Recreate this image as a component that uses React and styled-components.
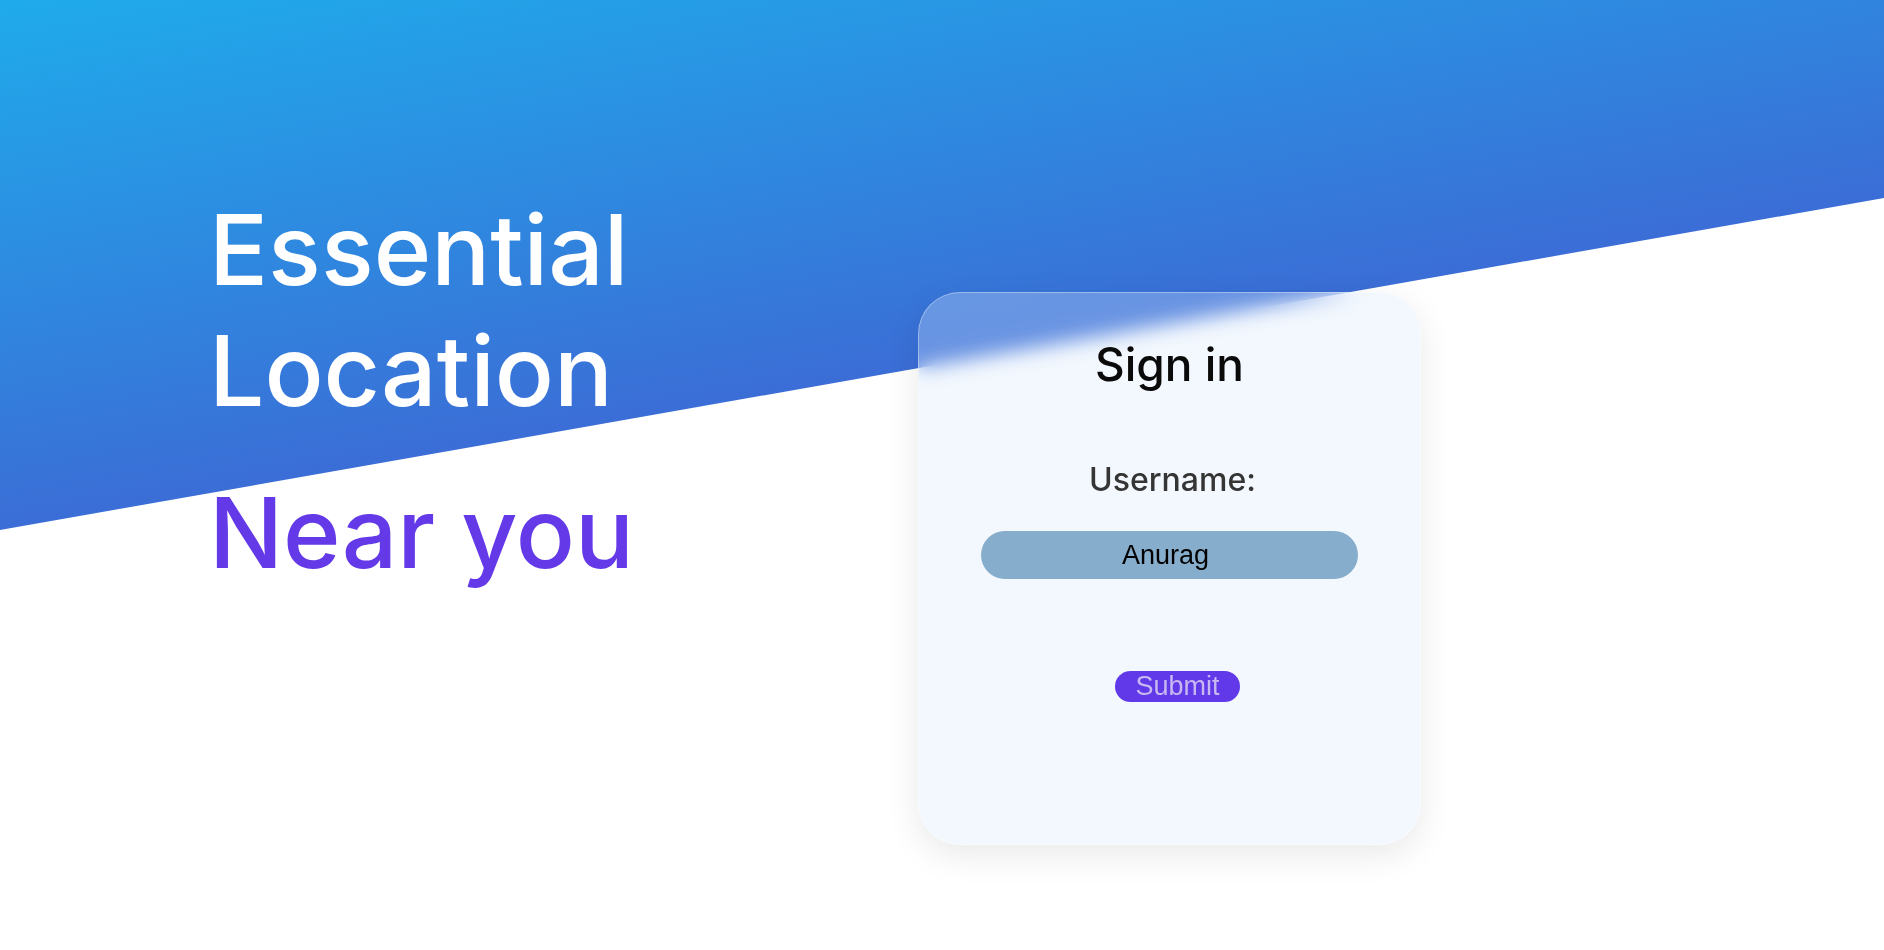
import React from "react";
import styled, { createGlobalStyle } from "styled-components";

const GlobalStyle = createGlobalStyle`
	html, body {
		margin: 0;
		padding: 0;
		background: #ffffff;
	}
	body {
		font-family: Inter, "Noto Sans", sans-serif;
	}
`;

const Page = styled.main`
	position: relative;
	height: 100vh;
	overflow: hidden;
	background: #ffffff;

	&::before {
		content: "";
		position: absolute;
		inset: 0 0 auto 0;
		height: 530px;
		background: linear-gradient(170deg, #1fabeb 0%, #3b6dd6 62%, #4062d3 100%);
		clip-path: polygon(0 0, 100% 0, 100% 198px, 0 530px);
		z-index: 0;
	}
`;

const Hero = styled.section`
	position: relative;
	z-index: 1;
	display: flex;
	align-items: flex-start;
	padding: 189px 0 0 209px;
`;

const Intro = styled.div`
	width: 709px;
	flex-shrink: 0;
`;

const Headline = styled.h1`
	margin: 0;
	width: 500px;
	font-size: 98px;
	line-height: 121px;
	font-weight: 500;
	color: ${p => p.$accent ? "#6339e8" : "#ffffff"};
	margin-top: ${p => p.$accent ? "41px" : "0"};
`;

const Card = styled.form`
	margin-top: 103px;
	width: 503px;
	height: 553px;
	box-sizing: border-box;
	padding-top: 43px;
	display: flex;
	flex-direction: column;
	align-items: center;
	border-radius: 42px;
	background: rgba(215, 232, 252, 0.3);
	backdrop-filter: blur(10px);
	border: 1px solid rgba(255, 255, 255, 0.35);
	box-shadow: 0 10px 34px rgba(0, 0, 0, 0.09);
`;

const CardTitle = styled.h2`
	margin: 0;
	font-size: 46px;
	line-height: 56px;
	font-weight: 500;
	color: #0a0a0a;
`;

const Label = styled.label`
	margin-top: 68px;
	font-size: 32px;
	line-height: 40px;
	font-weight: 500;
	color: #353535;
	padding-left: 6px;
`;

const TextInput = styled.input`
	margin-top: 31px;
	width: 377px;
	height: 48px;
	box-sizing: border-box;
	border: none;
	outline: none;
	border-radius: 24px;
	background: #87adcc;
	font-family: "Liberation Sans", Arial, sans-serif;
	font-size: 27px;
	color: #000000;
	text-align: center;
	padding: 0 12px 0 4px;
`;

const SubmitButton = styled.button`
	margin-top: 92px;
	margin-left: 16px;
	padding: 0 20px;
	height: 31px;
	border: none;
	border-radius: 16px;
	background: #6139e9;
	color: #c8b8f2;
	font-family: "Liberation Sans", Arial, sans-serif;
	font-size: 27px;
	line-height: 31px;
	cursor: pointer;
`;

const SignIn = () => (
	<Card onSubmit={e => e.preventDefault()}>
		<CardTitle>Sign in</CardTitle>
		<Label htmlFor="username">Username:</Label>
		<TextInput id="username" defaultValue="Anurag" />
		<SubmitButton type="submit">Submit</SubmitButton>
	</Card>
);

const App = () => (
	<Page>
		<GlobalStyle />
		<Hero>
			<Intro>
				<Headline>Essential Location</Headline>
				<Headline $accent>Near you</Headline>
			</Intro>
			<SignIn />
		</Hero>
	</Page>
);

export default App;
